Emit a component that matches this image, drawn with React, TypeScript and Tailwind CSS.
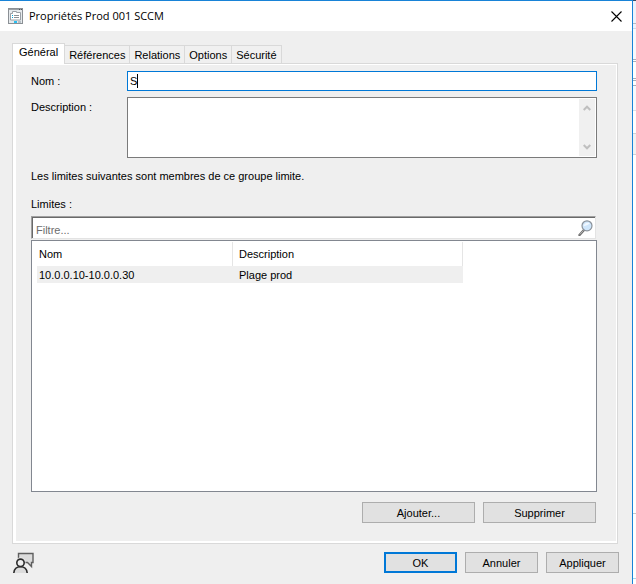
import React, { useState, type FC, type ReactNode } from 'react';

type Boundary = {
  readonly range: string;
  readonly description: string;
};

type StripLine = {
  readonly id: string;
  readonly className: string;
};

const tabs: ReadonlyArray<string> = ['Général', 'Références', 'Relations', 'Options', 'Sécurité'];

const boundaries: ReadonlyArray<Boundary> = [
  { range: '10.0.0.10-10.0.0.30', description: 'Plage prod' },
];

// edge of the console window that shows behind the dialog
const stripLines: ReadonlyArray<StripLine> = [
  { id: 'title', className: 'h-6 bg-[#eef2fb] border-t border-t-[#3b4a5f] border-b border-b-[#b4bac6]' },
  { id: 'menu', className: 'h-[5px] bg-[#eef2fb] border-b border-[#cfd8e8]' },
  { id: 'ribbon', className: 'h-[31px] bg-[#f7f9fd] border-b border-[#a9adb8]' },
  { id: 'ribbon-end', className: 'h-0.5 bg-white border-b border-[#a9adb8]' },
  { id: 'path', className: 'h-[17px] bg-white border-b border-[#a9adb8]' },
  { id: 'path-end', className: 'h-0.5 bg-white border-b border-[#a9adb8]' },
  { id: 'search', className: 'h-[5px] bg-white border-b border-[#a9adb8]' },
  { id: 'head', className: 'h-[25px] bg-[#f7fafd] border-b border-[#dcdfe4]' },
  { id: 'row', className: 'h-[23px] bg-white border-b border-[#cfd2d6]' },
  { id: 'row-selected', className: 'h-[21px] bg-[#f2f2f2] border-b border-[#cfd2d6]' },
  { id: 'list', className: 'h-[359px] bg-white border-b border-[#c5c8cc]' },
  { id: 'detail', className: 'h-[65px] bg-white border-b border-[#a8d8ea]' },
  { id: 'status', className: 'grow bg-white' },
];

const PropertiesIcon: FC = () => (
  <svg className="size-4" viewBox="0 0 16 16" aria-hidden="true">
    <rect x="0.5" y="0.5" width="14" height="15" fill="#e6eaed" stroke="#8b9095" />
    <path d="M1 1.5h13" stroke="#9ba0a5" />
    <path d="M11 1.5h1M13 1.5h1" stroke="#4c5258" />
    <path d="M2.5 5.5V12h10V4.5h-4v-1h-4v2z" fill="#fff" stroke="#9aa0a6" />
    <path d="M4 7.5h1M4 9.5h1" stroke="#00a4dc" />
    <path d="M6 7.5h5M6 9.5h5" stroke="#8b9095" />
    <path d="M6 14h3" stroke="#29bdef" strokeWidth="2" />
    <path d="M10 14h3" stroke="#b7c0c6" strokeWidth="2" />
  </svg>
);

const MagnifierIcon: FC = () => (
  <svg className="size-4" viewBox="0 0 16 16" aria-hidden="true">
    <path d="M2.5 15 7 10" stroke="#6d6d6d" strokeWidth="2.4" strokeLinecap="round" />
    <path d="M2.8 14.4 6.5 10.4" stroke="#c4c4c4" strokeWidth="0.8" />
    <circle cx="10" cy="5.8" r="5" fill="#cfe6fb" stroke="#8b929a" strokeWidth="1.2" />
    <path d="M6.4 6.2C7 3.2 10 2 12.8 3.2 11 5 9 5.6 6.4 6.2z" fill="#f1f8ff" />
  </svg>
);

const FeedbackIcon: FC = () => (
  <svg className="h-[22px] w-[22px]" viewBox="0 0 22 22" fill="none" aria-hidden="true">
    <path d="M6.5 1.5H21v9h-1.5v4l-4-4h-9z" fill="#dcdcdc" stroke="#5f5f5f" strokeWidth="1.4" />
    <circle cx="8.5" cy="10.5" r="5" fill="#efefef" />
    <path d="M1.8 21c.4-4 3-6.2 6.7-6.2s6.3 2.2 6.7 6.2" fill="#dcdcdc" stroke="#2b2b2b" strokeWidth="1.6" />
    <circle cx="8.5" cy="10.8" r="3.7" fill="#efefef" stroke="#2b2b2b" strokeWidth="1.6" />
  </svg>
);

type DialogButtonProps = {
  readonly children: ReactNode;
  readonly className: string;
};

const DialogButton: FC<DialogButtonProps> = ({ children, className }) => (
  <button
    type="button"
    className={`flex h-[21px] items-center justify-center bg-[#e1e1e1] hover:bg-[#e5f1fb] ${className}`}
  >
    {children}
  </button>
);

const App: FC = (): React.ReactElement => {
  const [name, setName] = useState<string>('S');
  const [activeTab, setActiveTab] = useState<string>('Général');

  return (
    <div className="flex min-h-screen bg-white font-['Liberation_Sans',Arial,sans-serif] text-[11px] leading-4 text-black">
      <div className="flex min-w-0 grow flex-col border-t border-r border-[#1883d7] bg-[#efefef]">
        <header className="flex h-[30px] items-center bg-white pr-2 pl-2">
          <PropertiesIcon />
          <h1 className="ml-[5px] grow font-['Open_Sans','Noto_Sans',sans-serif] text-[11px]">
            Propriétés Prod 001 SCCM
          </h1>
          <button type="button" aria-label="Fermer" className="flex size-4 items-center justify-center">
            <svg className="size-[11px]" viewBox="0 0 11 11" aria-hidden="true">
              <path d="M.5.5l10 10M10.5.5l-10 10" stroke="#000" strokeWidth="1.1" />
            </svg>
          </button>
        </header>

        <main className="flex grow flex-col px-3 pt-3">
          <div role="tablist" className="relative z-10 -mb-px flex items-end">
            {tabs.map((tab) => (
              <button
                key={tab}
                type="button"
                role="tab"
                aria-selected={tab === activeTab}
                onClick={() => setActiveTab(tab)}
                className={
                  tab === activeTab
                    ? 'h-[21px] border border-b-0 border-[#d9d9d9] bg-white px-1.5 pb-1'
                    : 'h-[19px] border border-l-0 border-[#d9d9d9] bg-[#f0f0f0] px-1'
                }
              >
                {tab}
              </button>
            ))}
          </div>

          <section className="mr-0.5 flex grow flex-col border border-[#d9d9d9] bg-white pt-px pr-px pb-0.5 pl-[3px]">
            <div className="flex grow flex-col bg-[#efefef] pt-1.5 pr-[19px] pb-[18px] pl-[15px]">
              <div className="flex">
                <label htmlFor="group-name" className="w-24 pt-0.5">
                  Nom :
                </label>
                <div className="relative flex h-5 min-w-0 grow border border-[#0078d7] bg-white">
                  <input
                    id="group-name"
                    type="text"
                    value={name}
                    onChange={(e) => setName(e.target.value)}
                    className="min-w-0 grow px-0.5 caret-transparent outline-none"
                  />
                  {/* text cursor, pushed along by a hidden copy of the value */}
                  <div className="pointer-events-none absolute inset-y-0.5 left-0.5 flex" aria-hidden="true">
                    <span className="invisible whitespace-pre">{name}</span>
                    <span className="w-px bg-black" />
                  </div>
                </div>
              </div>

              <div className="mt-1.5 flex">
                <label htmlFor="group-description" className="w-24 pt-0.5">
                  Description :
                </label>
                <div className="flex h-[61px] min-w-0 grow border border-[#7a7a7a] bg-white p-px">
                  <textarea
                    id="group-description"
                    className="min-w-0 grow resize-none overflow-hidden bg-white px-0.5 outline-none"
                  />
                  <div className="flex w-4 flex-col justify-between bg-[#f0f0f0]">
                    <button type="button" aria-label="Monter" className="flex h-[18px] items-center justify-center">
                      <svg className="h-[6px] w-2" viewBox="0 0 8 6" aria-hidden="true">
                        <path d="M.7 5 4 1.7 7.3 5" fill="none" stroke="#bfbfbf" strokeWidth="2" />
                      </svg>
                    </button>
                    <button type="button" aria-label="Descendre" className="flex h-[18px] items-center justify-center">
                      <svg className="h-[6px] w-2" viewBox="0 0 8 6" aria-hidden="true">
                        <path d="M.7 1 4 4.3 7.3 1" fill="none" stroke="#bfbfbf" strokeWidth="2" />
                      </svg>
                    </button>
                  </div>
                </div>
              </div>

              <p className="mt-2.5">Les limites suivantes sont membres de ce groupe limite.</p>
              <label htmlFor="boundary-filter" className="mt-3">
                Limites :
              </label>

              <div className="mt-1 mr-px flex h-[23px] items-center border border-t-[#a0a0a0] border-r-[#e3e3e3] border-b-[#e3e3e3] border-l-[#a0a0a0] bg-white pr-0.5 pl-px shadow-[inset_1px_1px_0_#696969]">
                <input
                  id="boundary-filter"
                  type="text"
                  placeholder="Filtre..."
                  className="min-w-0 grow px-[3px] pt-1 outline-none placeholder:text-[#6d6d6d]"
                />
                <button type="button" aria-label="Rechercher">
                  <MagnifierIcon />
                </button>
              </div>

              <div className="mt-px grow border border-[#828790] bg-white pt-px pl-[5px]">
                <table className="w-[426px] table-fixed border-separate border-spacing-0 text-left">
                  <thead>
                    <tr className="h-6">
                      <th className="w-[196px] border-r border-[#e5e5e5] px-0.5 font-normal">Nom</th>
                      <th className="border-r border-[#e5e5e5] px-1.5 font-normal">Description</th>
                    </tr>
                  </thead>
                  <tbody>
                    {boundaries.map((boundary) => (
                      <tr key={boundary.range} className="h-[17px] bg-[#efefef]">
                        <td className="px-0.5">{boundary.range}</td>
                        <td className="px-1.5">{boundary.description}</td>
                      </tr>
                    ))}
                  </tbody>
                </table>
              </div>

              <div className="mt-2.5 flex justify-end gap-2 pr-px">
                <DialogButton className="w-[113px] border border-[#adadad]">Ajouter...</DialogButton>
                <DialogButton className="w-[113px] border border-[#adadad]">Supprimer</DialogButton>
              </div>
            </div>
          </section>
        </main>

        <footer className="flex items-start justify-between pt-2 pr-[13px] pb-2.5 pl-3">
          <button type="button" aria-label="Commentaires">
            <FeedbackIcon />
          </button>
          <div className="flex gap-2">
            <DialogButton className="w-[73px] border-2 border-[#0078d7]">OK</DialogButton>
            <DialogButton className="w-[73px] border border-[#adadad]">Annuler</DialogButton>
            <DialogButton className="w-[73px] border border-[#adadad]">Appliquer</DialogButton>
          </div>
        </footer>
      </div>

      <div className="flex w-[3px] shrink-0 flex-col" aria-hidden="true">
        {stripLines.map((line) => (
          <div key={line.id} className={line.className} />
        ))}
      </div>
    </div>
  );
};

export default App;
